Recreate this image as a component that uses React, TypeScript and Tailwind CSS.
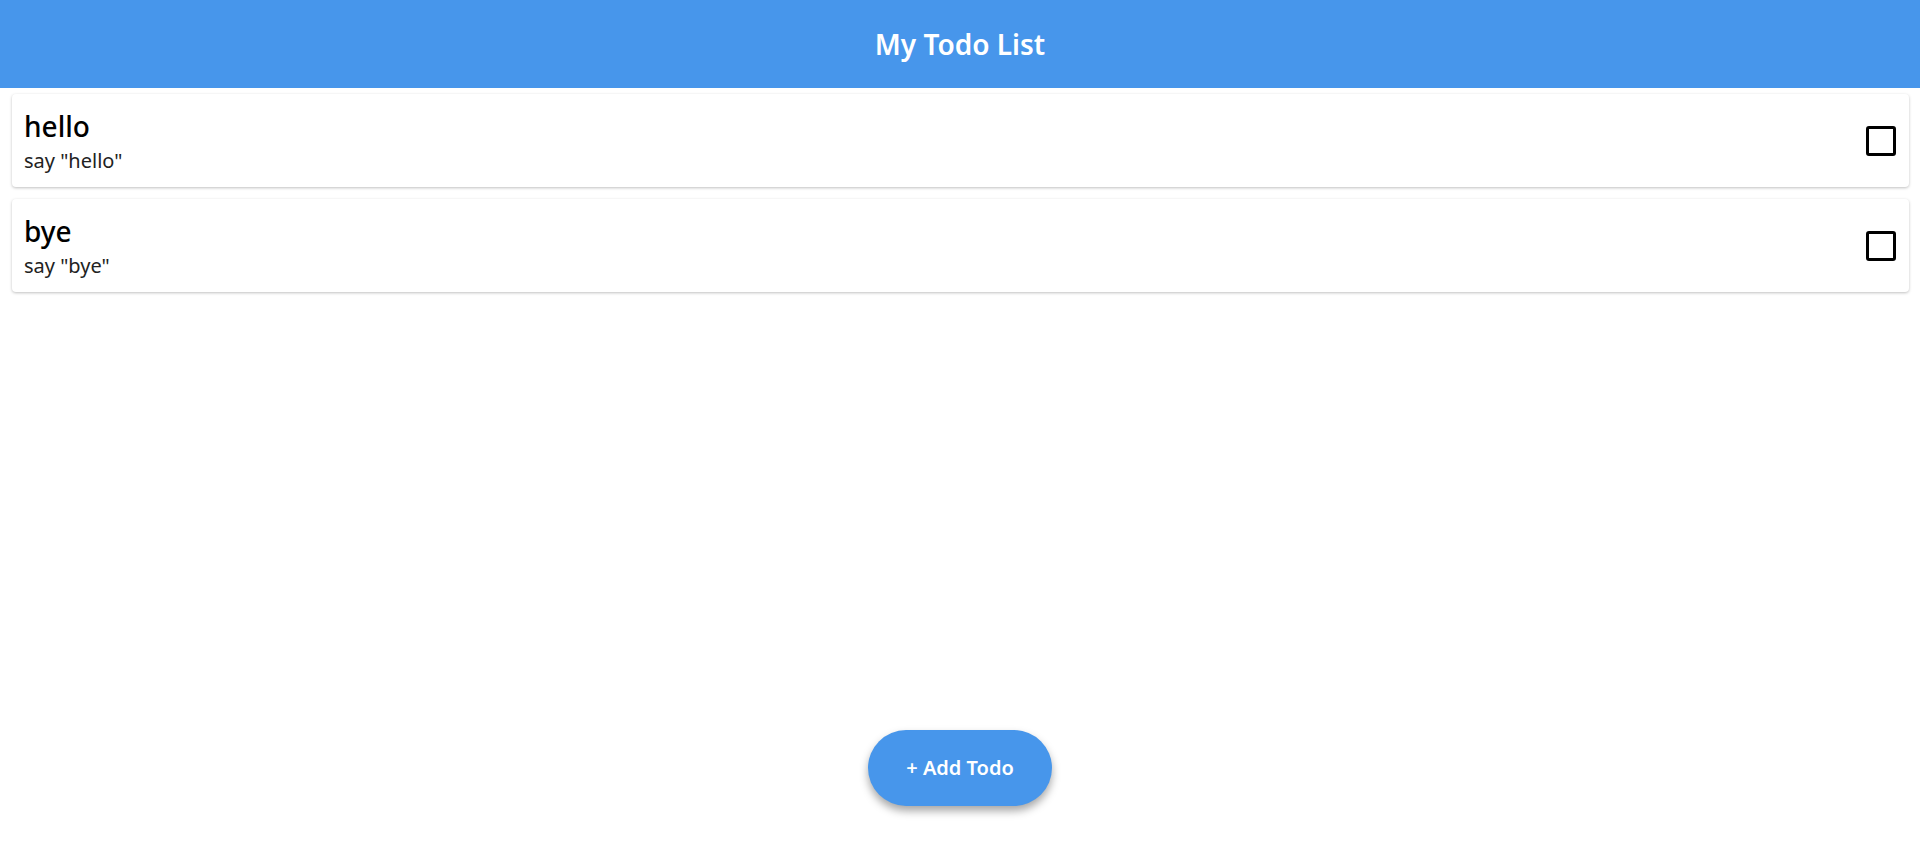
import { useState } from "react";

type Todo = { id: number; title: string; note: string; done: boolean };

const initial: Todo[] = [
  { id: 1, title: "hello", note: 'say "hello"', done: false },
  { id: 2, title: "bye", note: 'say "bye"', done: false },
];

export default function App() {
  const [todos, setTodos] = useState<Todo[]>(initial);

  function toggle(id: number) {
    setTodos((list) => list.map((t) => (t.id === id ? { ...t, done: !t.done } : t)));
  }

  return (
    <div
      className="flex h-screen flex-col bg-white"
      style={{ fontFamily: '"Noto Sans", "Open Sans", sans-serif' }}
    >
      <header className="flex h-[88px] shrink-0 items-center justify-center bg-[#4796eb]">
        <h1 className="text-[28px] font-semibold text-white">My Todo List</h1>
      </header>

      <main className="flex flex-1 flex-col gap-3 pl-3 pr-[11px] pt-[6px]">
        {todos.map((t) => (
          <div
            key={t.id}
            className="flex items-center justify-between rounded-[4px] bg-white py-3 pl-3 pr-[13px] shadow-[0_1px_3px_rgba(0,0,0,0.25)]"
          >
            <div>
              <div className="text-[28px] font-medium leading-[40px] text-black">{t.title}</div>
              <div className="pt-px text-[20px] leading-[28px] text-[#222]">{t.note}</div>
            </div>
            <button
              onClick={() => toggle(t.id)}
              className="flex h-[30px] w-[30px] items-center justify-center rounded-[3px] border-[3px] border-black"
            >
              {t.done && <span className="text-[20px] leading-none">✓</span>}
            </button>
          </div>
        ))}
      </main>

      <div className="flex justify-center pb-[35px]">
        <button className="h-[76px] w-[184px] rounded-full bg-[#4796eb] text-[20px] font-semibold text-white shadow-[0_5px_8px_rgba(0,0,0,0.35)]">
          + Add Todo
        </button>
      </div>
    </div>
  );
}
